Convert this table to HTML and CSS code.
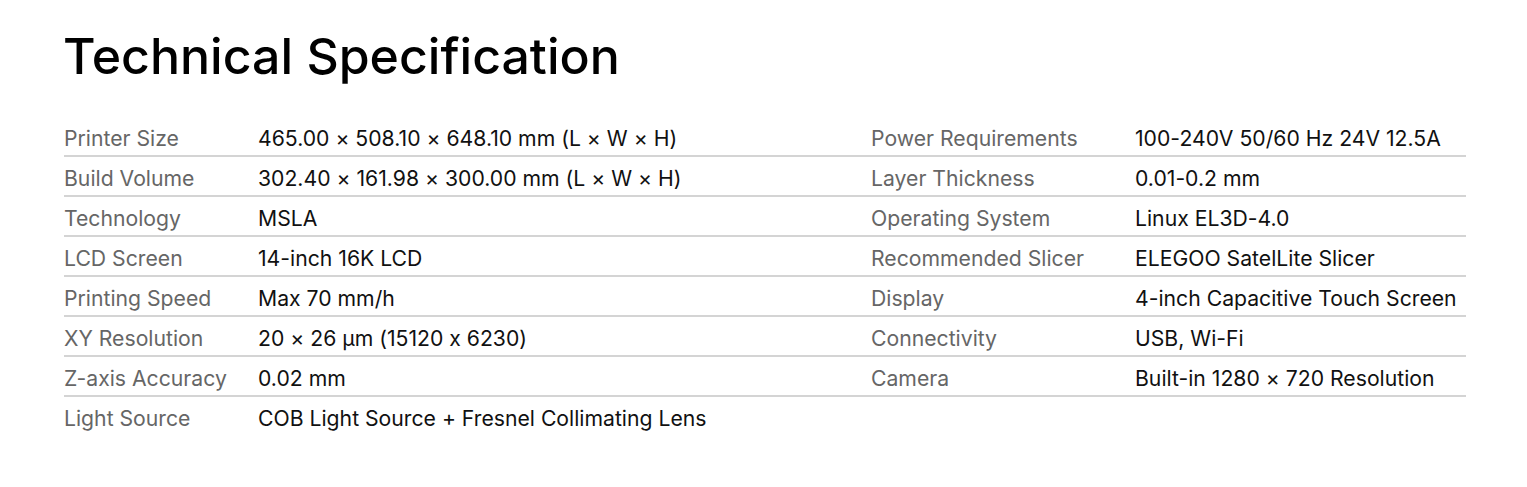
FILE: index.html
```html
<!DOCTYPE html>
<html lang="en">
<head>
<meta charset="utf-8">
<title>Technical Specification</title>
<link rel="stylesheet" href="styles.css">
</head>
<body>
<section class="spec">
  <h1 class="spec-title">Technical Specification</h1>
  <div class="spec-table">
    <div class="spec-row">
      <span class="label">Printer Size</span><span class="value">465.00 × 508.10 × 648.10 mm (L × W × H)</span>
      <span class="label">Power Requirements</span><span class="value">100-240V 50/60 Hz 24V 12.5A</span>
    </div>
    <div class="spec-row">
      <span class="label">Build Volume</span><span class="value">302.40 × 161.98 × 300.00 mm (L × W × H)</span>
      <span class="label">Layer Thickness</span><span class="value">0.01-0.2 mm</span>
    </div>
    <div class="spec-row">
      <span class="label">Technology</span><span class="value">MSLA</span>
      <span class="label">Operating System</span><span class="value">Linux EL3D-4.0</span>
    </div>
    <div class="spec-row">
      <span class="label">LCD Screen</span><span class="value">14-inch 16K LCD</span>
      <span class="label">Recommended Slicer</span><span class="value">ELEGOO SatelLite Slicer</span>
    </div>
    <div class="spec-row">
      <span class="label">Printing Speed</span><span class="value">Max 70 mm/h</span>
      <span class="label">Display</span><span class="value">4-inch Capacitive Touch Screen</span>
    </div>
    <div class="spec-row">
      <span class="label">XY Resolution</span><span class="value">20 × 26 µm (15120 x 6230)</span>
      <span class="label">Connectivity</span><span class="value">USB, Wi-Fi</span>
    </div>
    <div class="spec-row">
      <span class="label">Z-axis Accuracy</span><span class="value">0.02 mm</span>
      <span class="label">Camera</span><span class="value">Built-in 1280 × 720 Resolution</span>
    </div>
    <div class="spec-row spec-row-last">
      <span class="label">Light Source</span><span class="value">COB Light Source + Fresnel Collimating Lens</span>
      <span class="label"></span><span class="value"></span>
    </div>
  </div>
</section>
</body>
</html>
```

FILE: styles.css
```css
html, body {
  margin: 0;
  padding: 0;
  background: #ffffff;
}

body {
  font-family: Inter, "Liberation Sans", sans-serif;
  color: #111111;
  font-feature-settings: "calt" 0;
}

.spec {
  padding: 26px 61px 0 64px;
}

.spec-title {
  margin: 0 0 31px -1px;
  font-size: 50px;
  line-height: 60px;
  font-weight: 500;
  letter-spacing: 0;
  color: #000000;
}

.spec-table {
  display: flex;
  flex-direction: column;
}

.spec-row {
  display: grid;
  grid-template-columns: 194px 613px 264px 1fr;
  height: 40px;
  padding-top: 4px;
  align-items: center;
  border-bottom: 2px solid #d4d4d4;
  box-sizing: border-box;
  font-size: 21.2px;
  letter-spacing: 0;
  white-space: nowrap;
}

.spec-row-last {
  border-bottom: none;
  padding-bottom: 2px;
}

.label {
  color: #666666;
}

.value {
  color: #111111;
}
```
